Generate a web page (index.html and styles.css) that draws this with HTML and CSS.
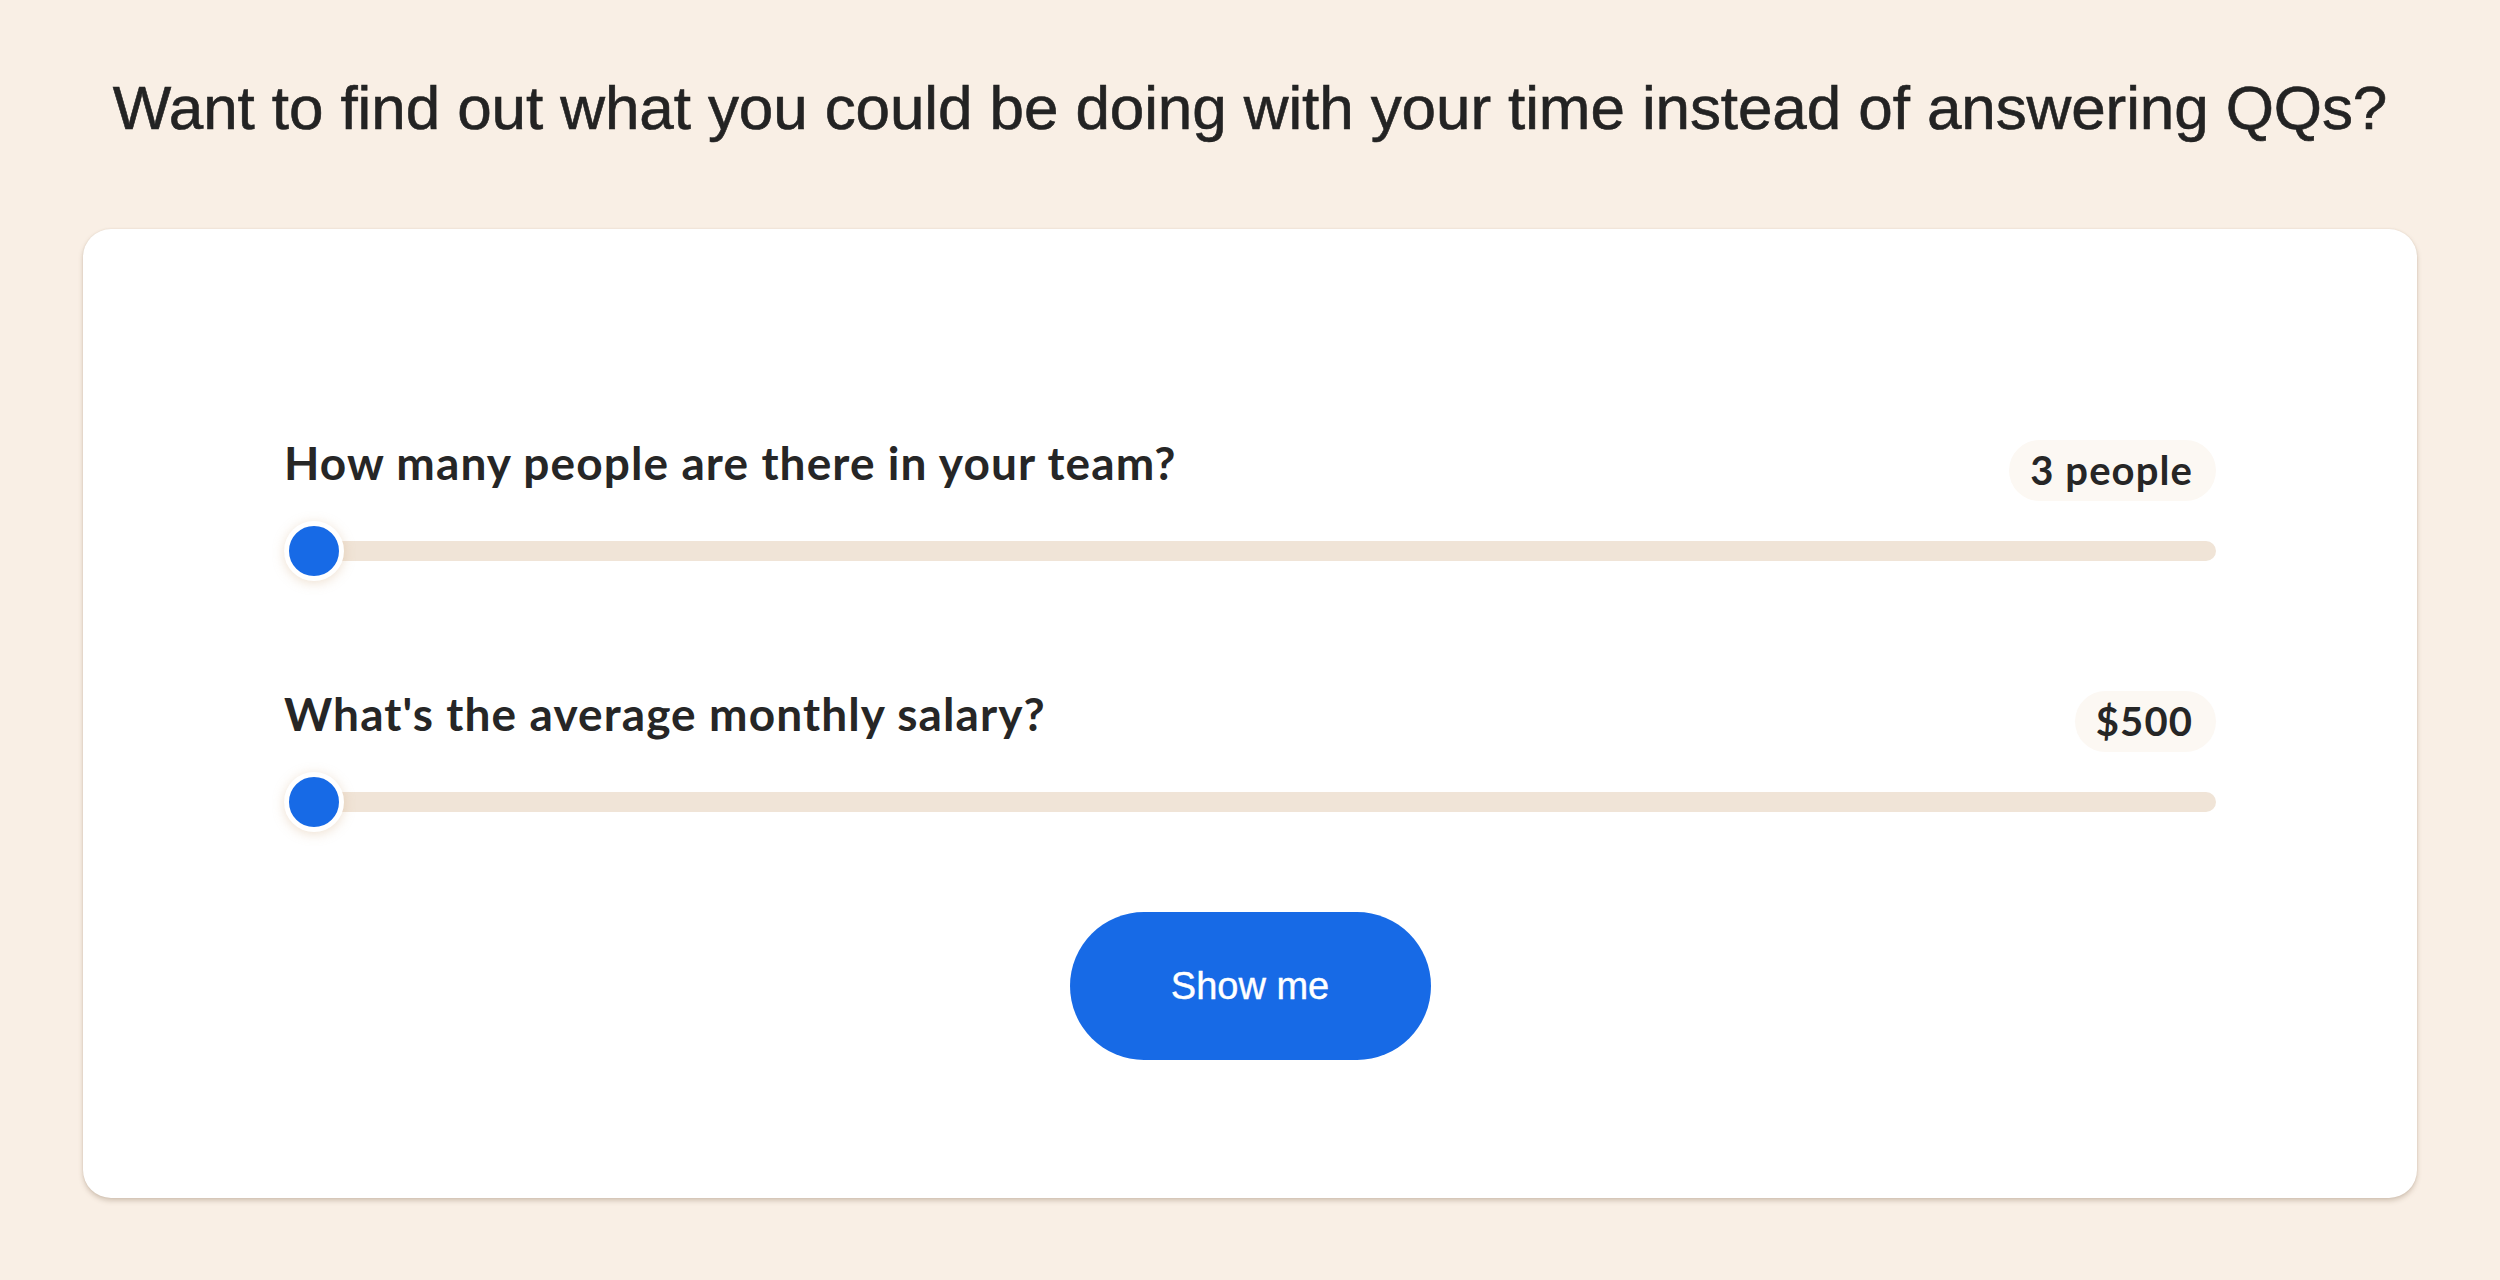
FILE: index.html
```html
<!DOCTYPE html>
<html lang="en">
<head>
<meta charset="utf-8">
<title>Time calculator</title>
<link rel="stylesheet" href="styles.css">
</head>
<body>
<main class="page">
  <h1 class="title">Want to find out what you could be doing with your time instead of answering QQs?</h1>
  <section class="card">
    <div class="field">
      <div class="field-head">
        <label class="label" for="team">How many people are there in your team?</label>
        <span class="badge">3 people</span>
      </div>
      <input class="range" id="team" type="range" min="3" max="100" value="3">
    </div>
    <div class="field">
      <div class="field-head">
        <label class="label" for="salary">What's the average monthly salary?</label>
        <span class="badge">$500</span>
      </div>
      <input class="range" id="salary" type="range" min="500" max="20000" value="500">
    </div>
    <div class="actions">
      <button class="button" type="button">Show me</button>
    </div>
  </section>
</main>
</body>
</html>
```

FILE: styles.css
```css
html, body {
  margin: 0;
  padding: 0;
  background: #f9efe5;
}

.page {
  display: flex;
  flex-direction: column;
  align-items: center;
  padding: 0 83px;
  min-height: 1280px;
  box-sizing: border-box;
}

.title {
  margin: 72px 0 0;
  font-family: "Liberation Sans", Arial, sans-serif;
  font-weight: 400;
  font-size: 62px;
  line-height: 72px;
  letter-spacing: -0.1px;
  color: #232323;
  -webkit-text-stroke: 0.6px #232323;
  text-align: center;
  white-space: nowrap;
}

.card {
  margin-top: 85px;
  width: 100%;
  box-sizing: border-box;
  background: #ffffff;
  border-radius: 28px;
  padding: 211px 201px 138px;
  display: flex;
  flex-direction: column;
  box-shadow: 0 3px 5px rgba(120, 95, 70, 0.28), 0 0 2px rgba(150, 120, 90, 0.18);
}

.field {
  display: flex;
  flex-direction: column;
  gap: 20px;
}

.field + .field {
  margin-top: 110px;
}

.field-head {
  display: flex;
  justify-content: space-between;
  align-items: flex-start;
}

.label {
  font-family: Lato, "Noto Sans", sans-serif;
  font-weight: 700;
  font-size: 46px;
  line-height: 45px;
  letter-spacing: 1.1px;
  color: #262626;
}

.badge {
  height: 61px;
  line-height: 61px;
  padding: 0 23px 0 21px;
  border-radius: 31px;
  background: #fcf8f3;
  font-family: Lato, "Noto Sans", sans-serif;
  font-weight: 700;
  font-size: 40px;
  letter-spacing: 1.1px;
  color: #262626;
}

.range {
  -webkit-appearance: none;
  appearance: none;
  display: block;
  width: 100%;
  height: 60px;
  margin: 0;
  padding: 0;
  background: transparent;
}

.range::-webkit-slider-runnable-track {
  height: 20px;
  border-radius: 10px;
  background: #f0e4d7;
}

.range::-webkit-slider-thumb {
  -webkit-appearance: none;
  appearance: none;
  box-sizing: border-box;
  width: 60px;
  height: 60px;
  margin-top: -20px;
  border-radius: 50%;
  border: 5px solid #ffffff;
  background: #176ae6;
  box-shadow: 0 2px 12px rgba(205, 165, 120, 0.35);
}

.actions {
  margin-top: 80px;
  display: flex;
  justify-content: center;
}

.button {
  width: 361px;
  height: 148px;
  border: 0;
  border-radius: 74px;
  background: #176ae6;
  color: #ffffff;
  font-family: "Liberation Sans", Arial, sans-serif;
  font-size: 38px;
  font-weight: 400;
  -webkit-text-stroke: 0.4px #ffffff;
  display: flex;
  align-items: center;
  justify-content: center;
  padding: 0;
  cursor: pointer;
}
```
